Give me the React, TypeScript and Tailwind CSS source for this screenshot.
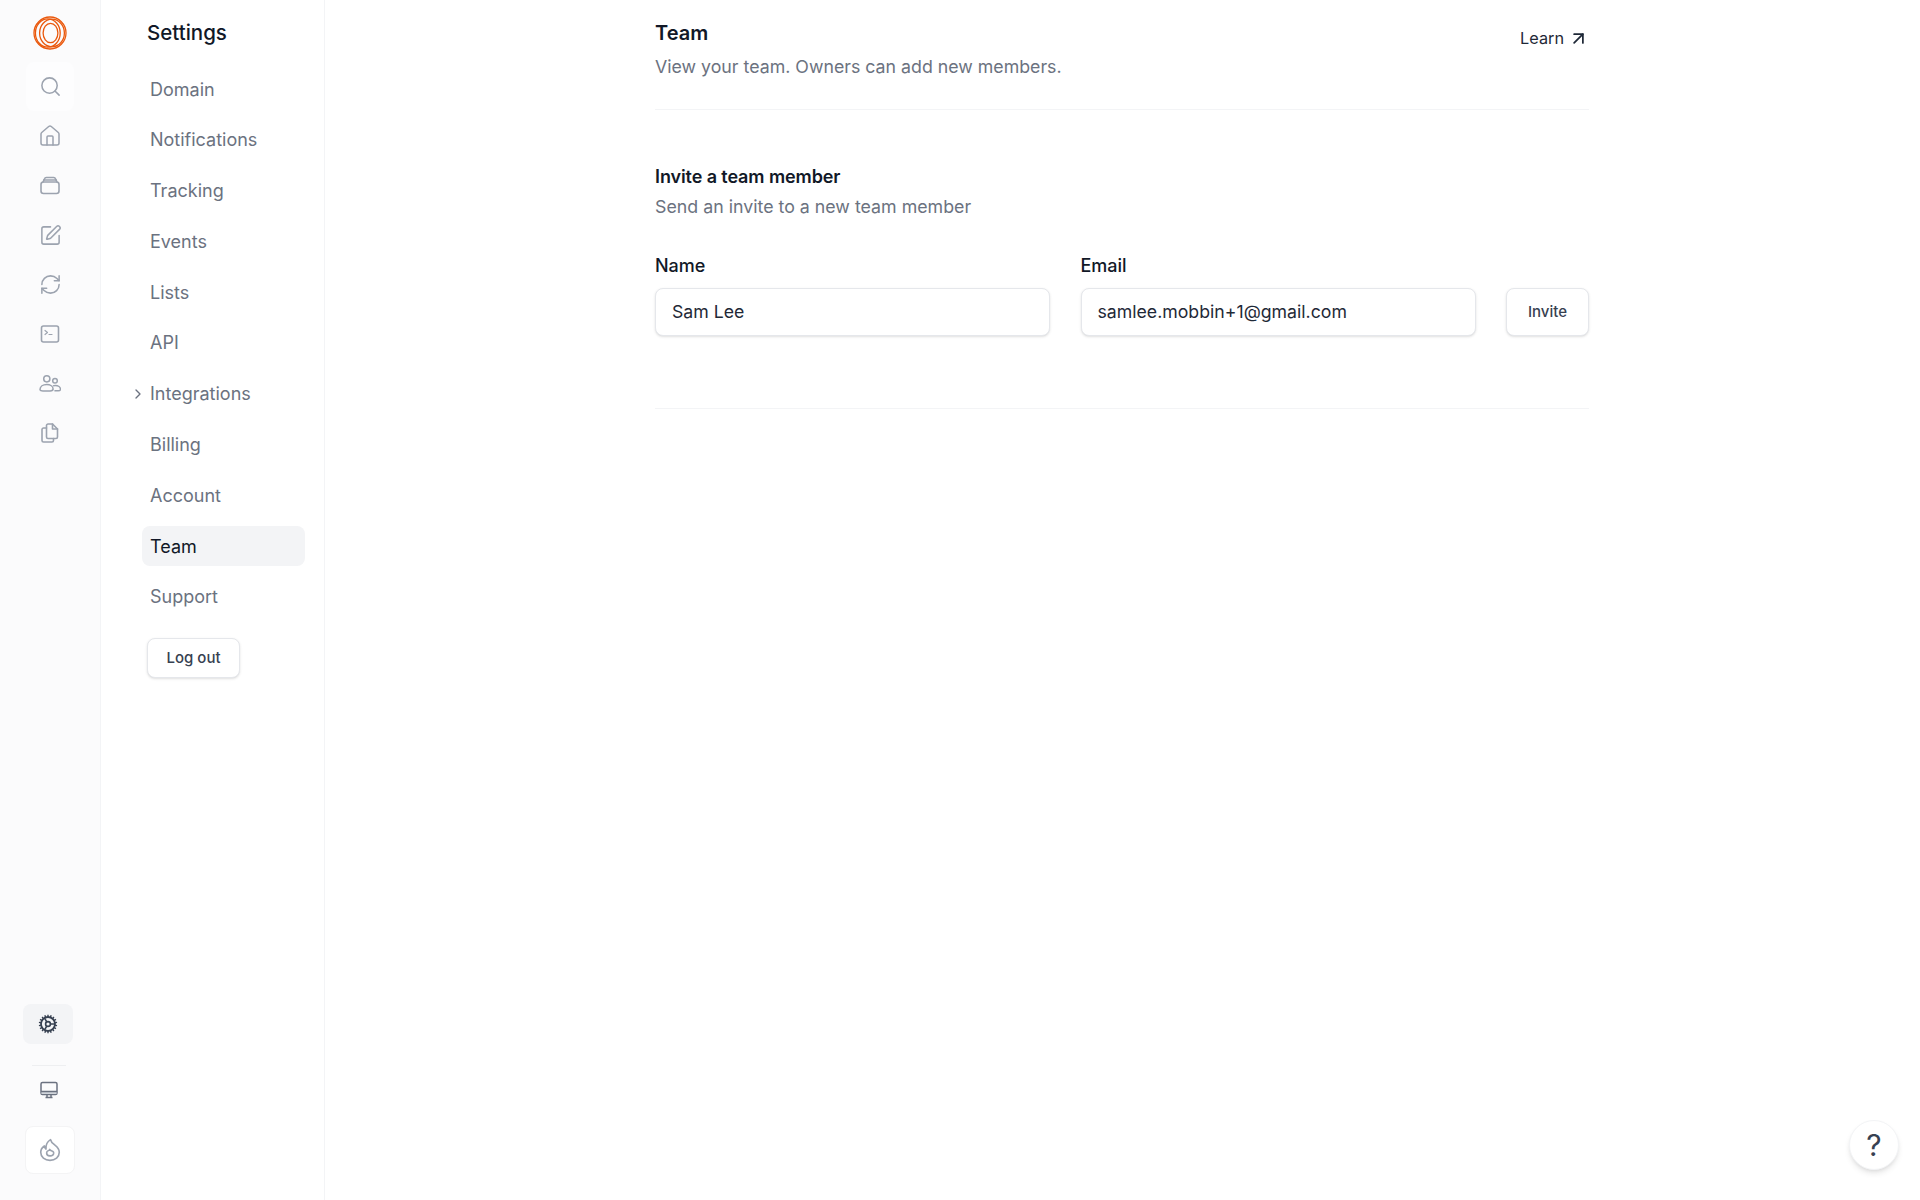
import React from 'react';
import { ChevronRight, ArrowUpRight, Search, SquarePen, RefreshCw, Home } from 'lucide-react';

const navItems = ['Domain', 'Notifications', 'Tracking', 'Events', 'Lists', 'API', 'Integrations', 'Billing', 'Account', 'Team', 'Support'];

function Logo() {
  return (
    <svg width="34" height="34" viewBox="0 0 34 34" fill="none" stroke="#ea580c" strokeWidth="1.300">
      <circle cx="17" cy="17" r="16" />
      <ellipse cx="14.800" cy="17" rx="12.400" ry="14.200" />
      <ellipse cx="19" cy="17" rx="12.400" ry="13.800" />
      <ellipse cx="17.500" cy="17" rx="7.400" ry="9.600" />
    </svg>
  );
}

function InboxStack() {
  return (
    <svg width="22" height="22" viewBox="0 1 22 22" fill="none" stroke="#9ca3af" strokeWidth="1.600" strokeLinecap="round" strokeLinejoin="round">
      <rect x="2" y="8" width="18" height="11.500" rx="2.500" />
      <path d="M4 8 5.500 4.800A2 2 0 0 1 7.300 3.500h7.400a2 2 0 0 1 1.800 1.300L18 8" />
      <path d="M4.800 6h12.400" />
    </svg>
  );
}

function Terminal() {
  return (
    <svg width="22" height="22" viewBox="0 0 22 22" fill="none" stroke="#9ca3af" strokeWidth="1.600" strokeLinecap="round" strokeLinejoin="round">
      <rect x="2.500" y="3" width="17" height="16" rx="2" />
      <path d="m6 7.500 2.500 2-2.500 2" strokeWidth="1.200" />
      <path d="M10 11.500h3" strokeWidth="1.200" />
    </svg>
  );
}

function People() {
  return (
    <svg width="22" height="22" viewBox="0 0 22 22" fill="none" stroke="#9ca3af" strokeWidth="1.500">
      <circle cx="7.800" cy="5.800" r="3.100" />
      <path d="M1 16.600c0-3 3-5 6.800-5 3.400 0 6.300 1.800 6.300 4.400 0 1.500-1.500 1.900-3 1.900H4c-1.800 0-3-.5-3-1.300Z" />
      <circle cx="16" cy="7.800" r="2.300" />
      <path d="M15.400 17.800h3.900c1.300 0 2.200-.5 2.200-1.600 0-2-2.300-3.700-5.200-3.700-.9 0-1.700.1-2.400.4" />
    </svg>
  );
}

function Pages() {
  return (
    <svg width="22" height="22" viewBox="0 1 22 22" fill="none" stroke="#9ca3af" strokeWidth="1.600" strokeLinecap="round" strokeLinejoin="round">
      <path d="M7.500 3.500c0-.8.700-1.500 1.500-1.500h4.500l5 5v8c0 .8-.7 1.500-1.500 1.500H9c-.8 0-1.500-.7-1.500-1.500Z" />
      <path d="M13.500 2v5h5" />
      <path d="M7.500 6H4.500c-.8 0-1.500.7-1.500 1.500v11c0 .8.700 1.500 1.500 1.500H13c.8 0 1.500-.7 1.500-1.500v-2" />
    </svg>
  );
}

function Gear() {
  const teeth = Array.from({ length: 18 }, (_, i) => (i * 360) / 18);
  return (
    <svg width="20" height="20" viewBox="0 0 20 20" fill="none" stroke="#374151">
      <circle cx="10" cy="10" r="7" strokeWidth="1.800" />
      {teeth.map((a) => (
        <line key={a} x1="10" y1="0.800" x2="10" y2="3.400" strokeWidth="1.400" transform={`rotate(${a} 10 10)`} />
      ))}
      <circle cx="10" cy="10" r="2.400" strokeWidth="1.600" />
      <path d="M12.400 10H16.500M8.800 7.900 6.700 4.400M8.800 12.100 6.700 15.600" strokeWidth="1.600" />
    </svg>
  );
}

function Screen() {
  return (
    <svg width="20" height="20" viewBox="0 0 20 20" fill="none" stroke="#6b7280" strokeWidth="1.500" strokeLinejoin="round">
      <rect x="2" y="2.500" width="16" height="12" rx="1.500" />
      <path d="M2.500 11.500h15v2.500h-15Z" fill="#d1d5db" stroke="none" />
      <path d="M2 11.500h16" />
      <path d="M8 14.500v3M12 14.500v3M6.500 17.500h7" />
    </svg>
  );
}

function Fire() {
  return (
    <svg width="24" height="24" viewBox="0 0 22 22" fill="none" stroke="#9ca3af" strokeWidth="1.500" strokeLinejoin="round">
      <path d="M11.500 1.500c.4 2.500 2 3.500 4 5 2.300 1.700 4 3.700 4 6.600 0 4.300-3.700 7.400-8.500 7.400S2.500 17.400 2.500 13.100c0-2.600 1.400-4.500 3.300-5.800.1 1.300.6 2.200 1.500 2.800-.3-3.800 1.300-6.800 4.200-8.600Z" />
      <path d="M10.800 10.500c.3 1 1.700 1.400 2.800 1.800.7.500.9 1.300.7 2.100-.4 1.300-1.800 2.100-3.400 2-1.700-.1-3-1.200-3-2.700 0-1.300 1-2.100 1.800-2.300.5-.1.900-.4 1.100-.9Z" />
    </svg>
  );
}

const railIcons = [
  <Search key="search" size={23} strokeWidth={1.6} />,
  <Home key="home" size={24} strokeWidth={1.5} />,
  <InboxStack key="inbox" />,
  <SquarePen key="pen" size={23} strokeWidth={1.6} />,
  <RefreshCw key="refresh" size={23} strokeWidth={1.6} />,
  <Terminal key="terminal" />,
  <People key="users" />,
  <Pages key="files" />,
];

function Rail() {
  return (
    <aside className="flex h-[1200px] w-[101px] shrink-0 flex-col border-r border-[#f3f4f6] bg-[#fbfbfc]">
      <div className="flex h-[62px] items-center justify-center pt-[4px]">
        <Logo />
      </div>
      <div className="flex flex-col items-center gap-[0.600px] text-[#9ca3af]">
        {railIcons.map((icon, i) => (
          <div key={i} className={`flex h-[49px] w-12 items-center justify-center rounded-lg ${i === 0 ? 'bg-[#fdfdfe]' : ''}`}>
            {icon}
          </div>
        ))}
      </div>
      <div className="mt-auto flex flex-col items-center pb-[26px]">
        <div className="ml-[-4px] flex h-10 w-[50px] items-center justify-center rounded-lg bg-[#f3f4f6]">
          <Gear />
        </div>
        <div className="ml-[-3px] mt-[21px] h-px w-[34px] bg-[#eeeff1]" />
        <div className="ml-[-3px] mt-[12px] flex h-6 w-6 items-center justify-center">
          <Screen />
        </div>
        <div className="mt-[24px] flex h-[48px] w-[50px] items-center justify-center rounded-lg border border-[#f4f4f5] bg-white">
          <Fire />
        </div>
      </div>
    </aside>
  );
}

function SettingsNav() {
  return (
    <nav className="flex h-[1200px] w-[224px] shrink-0 flex-col border-r border-[#f3f4f6] bg-white pl-[41px] pr-[19px]">
      <h2 className="mb-[24px] ml-[5px] mt-[21px] text-[20.500px] leading-6 font-medium text-[#111827]">Settings</h2>
      <ul className="flex flex-col gap-[10.800px]">
        {navItems.map((item) => (
          <li
            key={item}
            className={`relative flex h-10 items-center rounded-lg px-2 text-[18px] ${
              item === 'Team' ? 'bg-[#f3f4f6] text-[#111827]' : 'text-[#6b7280]'
            }`}
          >
            {item === 'Integrations' && <ChevronRight size={16} className="absolute left-[-12px] text-[#6b7280]" />}
            {item}
          </li>
        ))}
      </ul>
      <button className="ml-[5px] mt-[21px] h-10 w-[93px] rounded-lg border border-[#e5e7eb] bg-white text-[15px] font-[450] text-[#374151] shadow-sm">
        Log out
      </button>
    </nav>
  );
}

function Field({ label, value }: { label: string; value: string }) {
  return (
    <div className="flex w-[395px] flex-col">
      <label className="mb-[10px] text-[18px] leading-[24px] font-medium text-[#111827]">{label}</label>
      <div className="flex h-12 items-center rounded-lg border border-[#e5e7eb] bg-white px-4 text-[17.700px] text-[#1f2937] shadow-sm">
        {value}
      </div>
    </div>
  );
}

export default function App() {
  return (
    <div className="relative flex h-[1200px] overflow-hidden bg-white font-['Inter',sans-serif]">
      <Rail />
      <SettingsNav />
      <main className="ml-[330px] w-[934px]">
        <div className="flex items-start justify-between border-b border-[#f3f4f6] pb-[26px] pt-[21px]">
          <div>
            <h1 className="text-[20px] leading-6 font-semibold text-[#111827]">Team</h1>
            <p className="mt-[6px] text-[17.750px] leading-[32px] text-[#6b7280]">View your team. Owners can add new members.</p>
          </div>
          <a className="mt-[5px] flex items-center gap-1 text-[16.250px] text-[#1f2937]">
            Learn <ArrowUpRight size={21} strokeWidth={2} />
          </a>
        </div>
        <div className="border-b border-[#f3f4f6] pb-[72px] pt-[55px]">
          <h3 className="text-[18px] leading-6 font-semibold tracking-[-0.100px] text-[#111827]">Invite a team member</h3>
          <p className="mb-[35px] mt-[6px] text-[17.800px] leading-6 text-[#6b7280]">Send an invite to a new team member</p>
          <div className="flex items-end justify-between">
            <Field label="Name" value="Sam Lee" />
            <Field label="Email" value="samlee.mobbin+1@gmail.com" />
            <button className="h-12 w-[83px] rounded-lg border border-[#e5e7eb] bg-white text-[15px] font-[450] text-[#374151] shadow-sm">
              Invite
            </button>
          </div>
        </div>
      </main>
      <button className="absolute bottom-[30px] right-[21px] flex h-[50px] w-[50px] items-center justify-center rounded-full border border-[#f3f4f6] bg-white text-[30px] text-[#374151] shadow-md">
        ?
      </button>
    </div>
  );
}
